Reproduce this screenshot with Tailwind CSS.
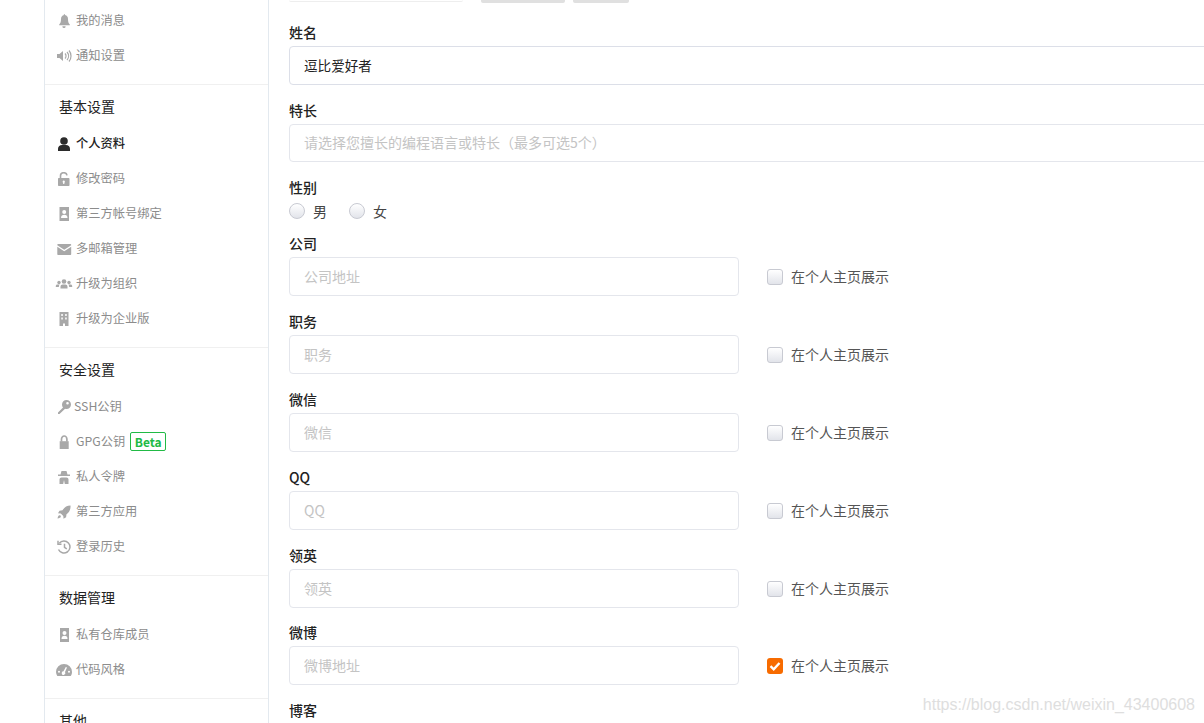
<!DOCTYPE html>
<html lang="en">
<head>
    <meta charset="UTF-8">
    <meta name="viewport" content="width=device-width, initial-scale=1.0">
    <title>个人资料</title>
    <script src="https://cdn.jsdelivr.net/npm/@tailwindcss/browser@4"></script>
</head>
<body class="bg-white font-['Noto_Sans_CJK_SC',sans-serif]">
  <div class="relative flex h-[723px] overflow-hidden pl-[44px]">

    <!-- sidebar -->
    <aside class="w-[225px] shrink-0 border-x border-[#e3e9ef] text-[12.25px] text-[#8c8c8c]">
      <div class="pt-[3px] pb-[11px] border-b border-[#f0f0f0]">
        <a class="flex items-center h-[35px] pl-[10px]">
          <svg class="w-[18px] h-[14px] mr-[3px]" viewBox="0 0 18 14" fill="#a8a8a8"><path d="M9 0a1 1 0 0 1 1 1.100c2 .4 3 2 3 4 0 3 .6 4.200 1.800 5.400v.8H4.200v-.8C5.400 9.300 6 8.100 6 5.100c0-2 1-3.600 3-4A1 1 0 0 1 9 0zM7.400 12.300h3.200A1.600 1.600 0 0 1 9 14a1.600 1.600 0 0 1-1.600-1.700z"/></svg>
          <span>我的消息</span>
        </a>
        <a class="flex items-center h-[35px] pl-[10px]">
          <svg class="w-[18px] h-[14px] mr-[3px]" viewBox="0 0 18 14" fill="#a8a8a8"><path d="M2 5h2.500L8 2v10L4.500 9H2z"/><path d="M10 4.500a3.500 3.500 0 0 1 0 5M12 3a6 6 0 0 1 0 8M14 1.500a8.500 8.500 0 0 1 0 11" fill="none" stroke="#a8a8a8" stroke-width="1.200"/></svg>
          <span>通知设置</span>
        </a>
      </div>

      <div class="pb-[11px] border-b border-[#f0f0f0]">
        <h3 class="h-[41px] pt-[2px] pl-[14px] flex items-center text-[14px] text-[#222222]">基本设置</h3>
        <a class="flex items-center h-[35px] pl-[10px] text-[#222222] font-medium">
          <svg class="w-[18px] h-[14px] mr-[3px]" viewBox="0 0 18 14" fill="#2b2b2b"><circle cx="9" cy="4" r="3.800"/><path d="M3 14v-2.200C3 9.600 4.800 8 7 8h4c2.200 0 4 1.600 4 3.800V14z"/></svg>
          <span>个人资料</span>
        </a>
        <a class="flex items-center h-[35px] pl-[10px]">
          <svg class="w-[18px] h-[14px] mr-[3px]" viewBox="0 0 18 14" fill="#a8a8a8"><path d="M4 6h9.500c.6 0 1 .4 1 1v6c0 .6-.4 1-1 1H4c-.6 0-1-.4-1-1V7c0-.6.4-1 1-1zm4.750 2.500a1.200 1.200 0 0 0-.6 2.200V12h1.200v-1.300a1.200 1.200 0 0 0-.6-2.200z" fill-rule="evenodd"/><path d="M5.500 6V3.700C5.500 1.900 7 .7 8.800.7c1.700 0 3 1.100 3.200 2.600" fill="none" stroke="#a8a8a8" stroke-width="1.600"/></svg>
          <span>修改密码</span>
        </a>
        <a class="flex items-center h-[35px] pl-[10px]">
          <svg class="w-[18px] h-[14px] mr-[3px]" viewBox="0 0 18 14" fill="#a8a8a8"><path d="M4.500 0h9.500v14H4.500zM9.200 3a2 2 0 1 0 0 4 2 2 0 0 0 0-4zM6 11h6.500c0-2-1.200-3.200-3.200-3.200S6 9 6 11z" fill-rule="evenodd"/></svg>
          <span>第三方帐号绑定</span>
        </a>
        <a class="flex items-center h-[35px] pl-[10px]">
          <svg class="w-[18px] h-[14px] mr-[3px]" viewBox="0 0 18 14" fill="#a8a8a8"><path d="M3 2h12.500c.4 0 .7.300.7.700v.5L9.200 7.800 2.300 3.200v-.5c0-.4.300-.7.700-.7zM2.300 4.800l6.900 4.500 7-4.500v7.500c0 .4-.3.700-.7.700H3c-.4 0-.7-.3-.7-.7z"/></svg>
          <span>多邮箱管理</span>
        </a>
        <a class="flex items-center h-[35px] pl-[10px]">
          <svg class="w-[18px] h-[14px] mr-[3px]" viewBox="0 0 18 14" fill="#a8a8a8"><circle cx="9" cy="4.500" r="2.300"/><circle cx="4" cy="5.500" r="1.700"/><circle cx="14" cy="5.500" r="1.700"/><path d="M5.500 11.500V9.800c0-1.300 1-2.200 2.200-2.200h2.600c1.200 0 2.200.9 2.200 2.200v1.700zM.8 10V9c0-.9.700-1.600 1.600-1.600h2.200c-.5.500-.7 1.200-.7 2V10zM17.200 10V9c0-.9-.7-1.600-1.600-1.600h-2.200c.5.500.7 1.200.7 2V10z"/></svg>
          <span>升级为组织</span>
        </a>
        <a class="flex items-center h-[35px] pl-[10px]">
          <svg class="w-[18px] h-[14px] mr-[3px]" viewBox="0 0 18 14" fill="#a8a8a8"><path d="M4.500 0h9v14H10v-2.500H8V14H4.500zM6.300 2v2h1.500V2zm3.900 0v2h1.500V2zM6.300 5.500v2h1.500v-2zm3.900 0v2h1.500v-2z" fill-rule="evenodd"/></svg>
          <span>升级为企业版</span>
        </a>
      </div>

      <div class="pb-[11px] border-b border-[#f0f0f0]">
        <h3 class="h-[41px] pt-[2px] pl-[14px] flex items-center text-[14px] text-[#222222]">安全设置</h3>
        <a class="flex items-center h-[35px] pl-[10px]">
          <svg class="w-[18px] h-[14px] mr-[1px]" viewBox="0 0 18 14" fill="#a8a8a8"><path d="M11.500 0a4.500 4.500 0 0 1 0 9c-.5 0-1-.1-1.400-.2L4.500 14H3v-1.600L8 7.500C7.300 6.700 7 5.700 7 4.500 7 2 9 0 11.500 0zm1 2a1.300 1.300 0 1 0 0 2.600 1.300 1.300 0 0 0 0-2.600z" fill-rule="evenodd"/></svg>
          <span>SSH公钥</span>
        </a>
        <a class="flex items-center h-[35px] pl-[10px]">
          <svg class="w-[18px] h-[14px] mr-[3px]" viewBox="0 0 18 14" fill="#a8a8a8"><path d="M4.700 6.200h9v7.800h-9z"/><path d="M6.500 6.500V4.200C6.500 2.500 7.700 1 9.200 1s2.700 1.500 2.700 3.200v2.300" fill="none" stroke="#a8a8a8" stroke-width="1.700"/></svg>
          <span>GPG公钥</span>
          <span class="ml-[5px] h-[19px] w-[36px] flex items-center justify-center rounded-[2px] border border-[#21ba45] text-[12px] font-bold text-[#21ba45]">Beta</span>
        </a>
        <a class="flex items-center h-[35px] pl-[10px]">
          <svg class="w-[18px] h-[14px] mr-[3px]" viewBox="0 0 18 14" fill="#a8a8a8"><path d="M6.500 1h5l1 3.500H15V6H3V4.500h2.500z"/><path d="M4.500 14V9.500c0-1.100.9-2 2-2h5c1.100 0 2 .9 2 2V14h-3.700L9 10l-.8 4z"/></svg>
          <span>私人令牌</span>
        </a>
        <a class="flex items-center h-[35px] pl-[10px]">
          <svg class="w-[18px] h-[14px] mr-[3px]" viewBox="0 0 18 14" fill="#a8a8a8"><path d="M15.500 .5c.3 3.700-1 6.700-4 8.800l-.4 3-2.600 1.500-.2-2.800L5.800 8.500 3 8.300 4.500 5.700l3-.4C9.600 2 12 .5 15.500 .5zM4.500 10.300c.9 0 1.400.6 1.300 1.400-.3 1-1.400 1.400-3.300 1.800.4-1.900.9-3 2-3.200z"/></svg>
          <span>第三方应用</span>
        </a>
        <a class="flex items-center h-[35px] pl-[10px]">
          <svg class="w-[18px] h-[14px] mr-[3px]" viewBox="0 0 18 14" fill="none" stroke="#a8a8a8" stroke-width="1.500"><path d="M4.300 3.200A6 6 0 1 1 3.500 9.500"/><path d="M3 .8v3.500h3.500" /><path d="M9.500 3.800v3.500l2.300 1.500"/></svg>
          <span>登录历史</span>
        </a>
      </div>

      <div class="pb-[11px] border-b border-[#f0f0f0]">
        <h3 class="h-[41px] pt-[2px] pl-[14px] flex items-center text-[14px] text-[#222222]">数据管理</h3>
        <a class="flex items-center h-[35px] pl-[10px]">
          <svg class="w-[18px] h-[14px] mr-[3px]" viewBox="0 0 18 14" fill="#a8a8a8"><path d="M5 0h9v14H5zM9.500 3a2 2 0 1 0 0 4 2 2 0 0 0 0-4zM6.500 11h6c0-2-1-3.200-3-3.200S6.500 9 6.500 11z" fill-rule="evenodd"/></svg>
          <span>私有仓库成员</span>
        </a>
        <a class="flex items-center h-[35px] pl-[10px]">
          <svg class="w-[18px] h-[14px] mr-[3px]" viewBox="0 0 18 14" fill="#a8a8a8"><path d="M9 1a8 8 0 0 1 8 8c0 1.600-.5 3-1.300 4H2.300A7.600 7.600 0 0 1 1 9a8 8 0 0 1 8-8zm1.800 3L8.500 8.300a1.800 1.800 0 1 0 1.500.8L12 4.500zM4 7.800a1 1 0 1 0 0 2 1 1 0 0 0 0-2zM14 7.800a1 1 0 1 0 0 2 1 1 0 0 0 0-2z" fill-rule="evenodd"/></svg>
          <span>代码风格</span>
        </a>
      </div>

      <h3 class="h-[41px] pt-[2px] pl-[14px] flex items-center text-[14px] text-[#222222]">其他</h3>
    </aside>

    <!-- form -->
    <main class="flex-1 min-w-0 pl-[20px] text-[14px] text-[#222222] overflow-hidden">
      <div class="flex h-[3px] mb-[20px]">
        <div class="w-[174px] h-[2px] border-b border-[#eeeeee] rounded-b"></div>
        <div class="ml-[18px] w-[84px] bg-[#e0e0e0] rounded-b-[2px]"></div>
        <div class="ml-[8px] w-[56px] bg-[#e0e0e0] rounded-b-[2px]"></div>
      </div>

      <label class="block h-[20px] mb-[3px] leading-[18px] font-medium">姓名</label>
      <input class="block w-[1000px] h-[39px] mb-[16px] pl-[14px] pb-[2px] rounded-[4px] border border-[#dcdfe8] text-[13.6px] text-[#222222] outline-none" value="逗比爱好者">

      <label class="block h-[20px] mb-[3px] leading-[18px] font-medium">特长</label>
      <input class="block w-[1000px] h-[38px] mb-[16px] pl-[14px] pb-[2px] rounded-[4px] border border-[#e4e6ec] text-[14px] outline-none placeholder:text-[#c4c4c4]" placeholder="请选择您擅长的编程语言或特长（最多可选5个）">

      <label class="block h-[20px] mb-[3px] leading-[18px] font-medium">性别</label>
      <div class="flex items-center h-[20px] mb-[13px] text-[#444444]">
        <span class="w-[16px] h-[16px] rounded-full border border-[#c8cad2] bg-linear-to-b from-white to-[#e2e4ea]"></span>
        <span class="ml-[8px]">男</span>
        <span class="ml-[22px] w-[16px] h-[16px] rounded-full border border-[#c8cad2] bg-linear-to-b from-white to-[#e2e4ea]"></span>
        <span class="ml-[8px]">女</span>
      </div>

      <label class="block h-[20px] mb-[3px] leading-[18px] font-medium">公司</label>
      <div class="flex items-center mb-[16px]">
        <input class="w-[450px] h-[39px] pl-[14px] pb-[2px] rounded-[4px] border border-[#e4e6ec] text-[14px] outline-none placeholder:text-[#c4c4c4]" placeholder="公司地址">
        <span class="ml-[28px] w-[16px] h-[16px] rounded-[3px] border border-[#c8cad2] bg-linear-to-b from-white to-[#e2e4ea]"></span>
        <span class="ml-[8px] text-[#555555]">在个人主页展示</span>
      </div>

      <label class="block h-[20px] mb-[3px] leading-[18px] font-medium">职务</label>
      <div class="flex items-center mb-[16px]">
        <input class="w-[450px] h-[39px] pl-[14px] pb-[2px] rounded-[4px] border border-[#e4e6ec] text-[14px] outline-none placeholder:text-[#c4c4c4]" placeholder="职务">
        <span class="ml-[28px] w-[16px] h-[16px] rounded-[3px] border border-[#c8cad2] bg-linear-to-b from-white to-[#e2e4ea]"></span>
        <span class="ml-[8px] text-[#555555]">在个人主页展示</span>
      </div>

      <label class="block h-[20px] mb-[3px] leading-[18px] font-medium">微信</label>
      <div class="flex items-center mb-[16px]">
        <input class="w-[450px] h-[39px] pl-[14px] pb-[2px] rounded-[4px] border border-[#e4e6ec] text-[14px] outline-none placeholder:text-[#c4c4c4]" placeholder="微信">
        <span class="ml-[28px] w-[16px] h-[16px] rounded-[3px] border border-[#c8cad2] bg-linear-to-b from-white to-[#e2e4ea]"></span>
        <span class="ml-[8px] text-[#555555]">在个人主页展示</span>
      </div>

      <label class="block h-[20px] mb-[3px] leading-[18px] font-medium">QQ</label>
      <div class="flex items-center mb-[16px]">
        <input class="w-[450px] h-[39px] pl-[14px] pb-[2px] rounded-[4px] border border-[#e4e6ec] text-[14px] outline-none placeholder:text-[#c4c4c4]" placeholder="QQ">
        <span class="ml-[28px] w-[16px] h-[16px] rounded-[3px] border border-[#c8cad2] bg-linear-to-b from-white to-[#e2e4ea]"></span>
        <span class="ml-[8px] text-[#555555]">在个人主页展示</span>
      </div>

      <label class="block h-[20px] mb-[3px] leading-[18px] font-medium">领英</label>
      <div class="flex items-center mb-[15px]">
        <input class="w-[450px] h-[39px] pl-[14px] pb-[2px] rounded-[4px] border border-[#e4e6ec] text-[14px] outline-none placeholder:text-[#c4c4c4]" placeholder="领英">
        <span class="ml-[28px] w-[16px] h-[16px] rounded-[3px] border border-[#c8cad2] bg-linear-to-b from-white to-[#e2e4ea]"></span>
        <span class="ml-[8px] text-[#555555]">在个人主页展示</span>
      </div>

      <label class="block h-[20px] mb-[3px] leading-[18px] font-medium">微博</label>
      <div class="flex items-center mb-[16px]">
        <input class="w-[450px] h-[39px] pl-[14px] pb-[2px] rounded-[4px] border border-[#e4e6ec] text-[14px] outline-none placeholder:text-[#c4c4c4]" placeholder="微博地址">
        <span class="ml-[28px] w-[16px] h-[16px] rounded-[3px] bg-[#f76b00] flex items-center justify-center">
          <svg class="w-[12px] h-[12px]" viewBox="0 0 12 12" fill="none" stroke="#ffffff" stroke-width="2.400"><path d="M1.500 6.200 4.700 9.300 10.500 3"/></svg>
        </span>
        <span class="ml-[8px] text-[#555555]">在个人主页展示</span>
      </div>

      <label class="block h-[20px] mb-[3px] leading-[18px] font-medium">博客</label>
    </main>

    <!-- csdn watermark -->
    <div class="absolute right-[9px] top-[695px] font-['Liberation_Sans',sans-serif] text-[16px] leading-[20px] text-[#dedede]">https://blog.csdn.net/weixin_43400608</div>
  </div>
</body>
</html>
